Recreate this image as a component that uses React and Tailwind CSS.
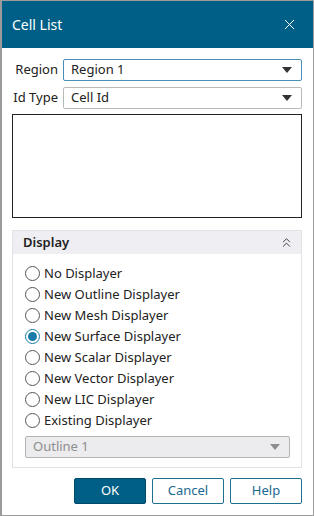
import { X, ChevronsUp } from 'lucide-react'

const OPTIONS = [
  'No Displayer',
  'New Outline Displayer',
  'New Mesh Displayer',
  'New Surface Displayer',
  'New Scalar Displayer',
  'New Vector Displayer',
  'New LIC Displayer',
  'Existing Displayer',
]

function Caret({ color = '#333' }) {
  return (
    <svg width="10" height="6" viewBox="0 0 10 6">
      <path d="M0 0 H10 L5 6 Z" fill={color} />
    </svg>
  )
}

function Combo({ value, focused, disabled }) {
  return (
    <div
      className={`h-[22px] flex items-center justify-between pl-[7px] pr-[9px] rounded-[2px] border ${
        focused
          ? 'border-[#4a8fb8] bg-white text-[#222]'
          : disabled
          ? 'border-[#b4b4b4] bg-[#ecebee] text-[#8d8d8d]'
          : 'border-[#b9b9b9] bg-white text-[#222]'
      }`}
    >
      <span>{value}</span>
      <Caret color={disabled ? '#8d8d8d' : '#333'} />
    </div>
  )
}

function Radio({ label, checked }) {
  return (
    <div className="h-[21px] flex items-center gap-[4px]">
      <span
        className={`w-[15px] h-[15px] rounded-full border flex items-center justify-center bg-white ${
          checked ? 'border-[#1a7aa8]' : 'border-[#555]'
        }`}
      >
        {checked && <span className="w-[9px] h-[9px] rounded-full bg-[#1a7aa8]" />}
      </span>
      <span className="text-[#222]">{label}</span>
    </div>
  )
}

export default function App() {
  return (
    <div
      className="w-[314px] h-[516px] bg-white border border-[#9b9b9b] border-l-2 flex flex-col text-[13px]"
      style={{ fontFamily: '"Noto Sans", sans-serif' }}
    >
      {/* Title bar */}
      <div className="h-[47px] bg-[#005f87] flex items-center justify-between pl-[10px] pr-[15px] text-white">
        <span className="text-[14px]">Cell List</span>
        <X size={17} strokeWidth={1.4} />
      </div>

      <div className="flex-1 flex flex-col pl-[10px] pr-[11px] pt-[11px]">
        {/* Region / Id Type */}
        <div className="grid grid-cols-[46px_1fr] gap-x-[5px] gap-y-[6px] items-center">
          <span className="text-right text-[#222] whitespace-nowrap">Region</span>
          <Combo value="Region 1" focused />
          <span className="text-right text-[#222] whitespace-nowrap">Id Type</span>
          <Combo value="Cell Id" />
        </div>

        {/* List */}
        <div className="mt-[5px] h-[104px] border border-[#222] bg-white" />

        {/* Display section */}
        <div className="mt-[12px] border border-[#e2e1e5] flex flex-col">
          <div className="h-[23px] bg-[#efeef2] flex items-center justify-between pl-[10px] pr-[7px]">
            <span className="font-semibold text-[#222]">Display</span>
            <ChevronsUp size={15} strokeWidth={1.5} color="#333" />
          </div>
          <div className="pt-[9px] pl-[12px] pr-[11px] pb-[9px] flex flex-col">
            {OPTIONS.map(o => (
              <Radio key={o} label={o} checked={o === 'New Surface Displayer'} />
            ))}
            <div className="mt-[5px]">
              <Combo value="Outline 1" disabled />
            </div>
          </div>
        </div>

        {/* Buttons */}
        <div className="mt-[10px] flex justify-end gap-[6px]">
          <button className="w-[72px] h-[26px] rounded-[2px] bg-[#005f87] border border-[#004a6a] text-white">
            OK
          </button>
          <button className="w-[72px] h-[26px] rounded-[2px] bg-white border border-[#1f6f93] text-[#1b6a8e]">
            Cancel
          </button>
          <button className="w-[72px] h-[26px] rounded-[2px] bg-white border border-[#1f6f93] text-[#1b6a8e]">
            Help
          </button>
        </div>
      </div>
    </div>
  )
}
